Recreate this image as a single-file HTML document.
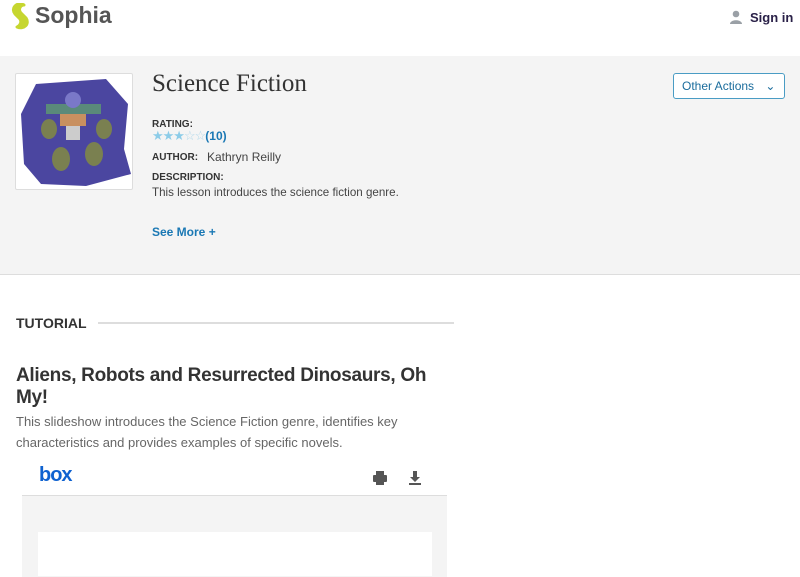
<!DOCTYPE html>
<html><head><meta charset="utf-8"><style>
body{margin:0;width:800px;height:576px;overflow:hidden;font-family:"Liberation Sans",sans-serif;background:#fff;position:relative}
.a{position:absolute}
</style></head><body>
<svg class="a" style="left:10px;top:3px" width="20" height="27" viewBox="0 0 20 27"><path d="M12 1 C5 0 1 6 5 11 L10 16 C12 19 10 23 7 24 C14 27 20 21 16 15 L11 10 C8 7 10 2 14 2 Z" fill="#c6d630" stroke="#c6d630" stroke-width="3" stroke-linejoin="round"/></svg>
<div class="a" style="left:35px;top:2px;font-size:23px;font-weight:bold;color:#555">Sophia</div>
<svg class="a" style="left:729px;top:10px" width="14" height="14" viewBox="0 0 14 14"><circle cx="7" cy="4" r="3.3" fill="#9aa0a6"/><path d="M1 14 C1 9 13 9 13 14Z" fill="#9aa0a6"/></svg>
<div class="a" style="left:750px;top:10px;font-size:13px;font-weight:bold;color:#2a2148">Sign in</div>
<div class="a" style="left:0;top:56px;width:800px;height:218px;background:#f4f4f4;border-bottom:1px solid #ddd"></div>
<div class="a" style="left:15px;top:73px;width:116px;height:115px;border:1px solid #ddd;background:#fff;border-radius:2px">
<svg width="116" height="115" viewBox="0 0 116 115"><path d="M20 10 L90 5 L112 30 L108 75 L115 100 L70 112 L25 110 L8 90 L5 40 Z" fill="#4b46a0"/>
<rect x="30" y="30" width="55" height="10" fill="#5a8a7a"/><circle cx="57" cy="26" r="8" fill="#7a78c8"/>
<rect x="44" y="40" width="26" height="12" fill="#c89060"/><rect x="50" y="52" width="14" height="14" fill="#ccc"/>
<ellipse cx="33" cy="55" rx="8" ry="10" fill="#7a8050"/><ellipse cx="88" cy="55" rx="8" ry="10" fill="#7a8050"/>
<ellipse cx="45" cy="85" rx="9" ry="12" fill="#7a8050"/><ellipse cx="78" cy="80" rx="9" ry="12" fill="#7a8050"/></svg></div>
<div class="a" style="left:152px;top:70px;font-family:'Liberation Serif',serif;font-size:25px;color:#333">Science Fiction</div>
<div class="a" style="left:152px;top:119px;font-size:10px;font-weight:bold;color:#333">RATING:</div>
<div class="a" style="left:152px;top:128px;font-size:13px;color:#8ccce8;letter-spacing:-1px">★★★<span style="color:#b0d8ea">☆☆</span><span style="color:#1a78b4;letter-spacing:0;font-weight:bold;font-size:12px">(10)</span></div>
<div class="a" style="left:152px;top:152px;font-size:10px;font-weight:bold;color:#333">AUTHOR:</div>
<div class="a" style="left:207px;top:150px;font-size:12px;color:#444">Kathryn Reilly</div>
<div class="a" style="left:152px;top:172px;font-size:10px;font-weight:bold;color:#333">DESCRIPTION:</div>
<div class="a" style="left:152px;top:186px;font-size:11.6px;color:#444">This lesson introduces the science fiction genre.</div>
<div class="a" style="left:152px;top:225px;font-size:12px;color:#1a78b4;font-weight:bold">See More +</div>
<div class="a" style="left:673px;top:73px;width:110px;height:24px;border:1px solid #4a9cc4;border-radius:3px;background:#fff;font-size:12px;color:#1a6c9c;line-height:24px;text-indent:8px">Other Actions <span style="margin-left:8px">⌄</span></div>
<div class="a" style="left:16px;top:315px;font-size:14px;font-weight:bold;color:#333">TUTORIAL</div>
<div class="a" style="left:98px;top:322px;width:356px;height:2px;background:#ddd"></div>
<div class="a" style="left:16px;top:365px;width:445px;font-size:19px;font-weight:bold;color:#333;line-height:22px;letter-spacing:-0.3px">Aliens, Robots and Resurrected Dinosaurs, Oh My!</div>
<div class="a" style="left:16px;top:411px;width:430px;font-size:13px;color:#666;line-height:21px">This slideshow introduces the Science Fiction genre, identifies key characteristics and provides examples of specific novels.</div>
<div class="a" style="left:39px;top:464px;font-size:20px;font-weight:bold;color:#0f62d0;letter-spacing:-1px">box</div>
<svg class="a" style="left:372px;top:470px" width="16" height="16" viewBox="0 0 16 16"><rect x="4" y="1" width="8" height="4" fill="#555"/><rect x="1" y="5" width="14" height="7" rx="1" fill="#555"/><rect x="4" y="10" width="8" height="5" fill="#555"/></svg>
<svg class="a" style="left:408px;top:470px" width="14" height="16" viewBox="0 0 14 16"><path d="M5 1h4v6h3l-5 5-5-5h3z" fill="#555"/><rect x="1" y="13" width="12" height="2" fill="#555"/></svg>
<div class="a" style="left:22px;top:495px;width:425px;height:81px;background:#f4f4f4;border-top:1px solid #ddd"></div>
<div class="a" style="left:38px;top:532px;width:394px;height:44px;background:#fff"></div>
</body></html>
